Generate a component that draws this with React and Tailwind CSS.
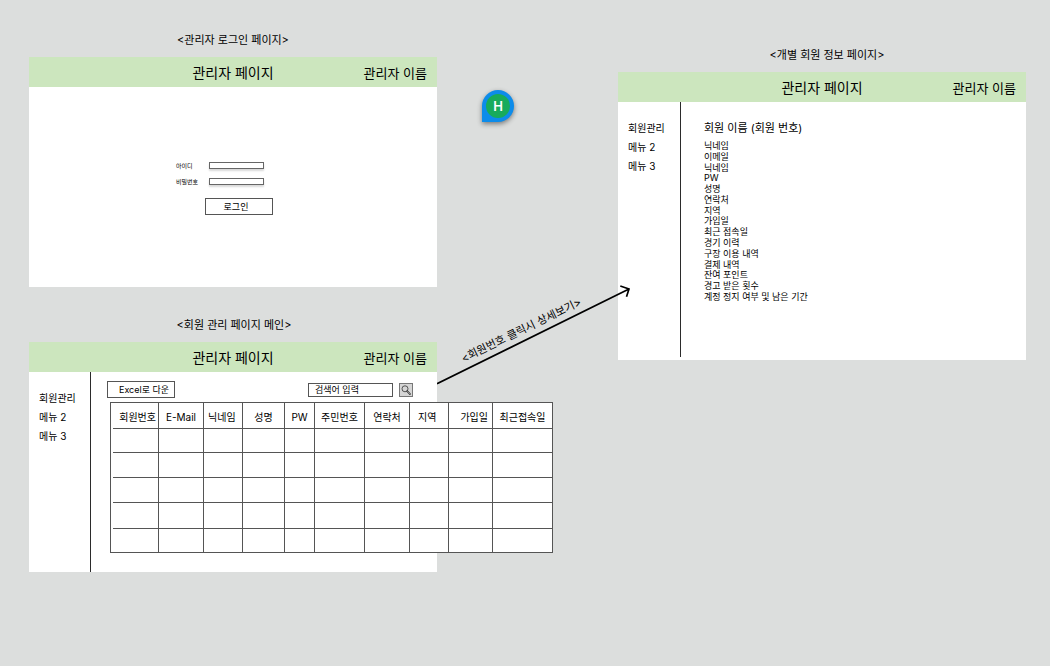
const fontStack = "font-['Inter','Noto_Sans_CJK_KR',sans-serif]";

function Frame({ caption, place, captionClass = '', bodyClass, children }) {
  return (
    <section className={`absolute w-[408px] ${place}`}>
      <h2 className={`mb-[9px] text-center text-[11px] leading-4 ${captionClass}`}>{caption}</h2>
      <header className="grid h-[30px] grid-cols-[1fr_auto_1fr] items-center bg-[#cce6be] px-[10px] pt-px">
        <h3 className="col-start-2 text-[14px] leading-5">관리자 페이지</h3>
        <span className="justify-self-end text-[13px] leading-5">관리자 이름</span>
      </header>
      <div className={`bg-white ${bodyClass}`}>{children}</div>
    </section>
  );
}

function Sidebar({ className = '' }) {
  return (
    <nav className={`shrink-0 border-r border-[#2b2b2b] pt-[18px] pl-[10px] text-[10px] ${className}`}>
      <ul className="flex flex-col gap-[3px] leading-4">
        <li><a href="#members">회원관리</a></li>
        <li><a href="#menu-2">메뉴 2</a></li>
        <li><a href="#menu-3">메뉴 3</a></li>
      </ul>
    </nav>
  );
}

function LoginField({ id, label, type }) {
  return (
    <div className="flex items-center">
      <label htmlFor={id} className="w-[33px] text-[6px] leading-[7px] whitespace-nowrap">{label}</label>
      <input
        id={id}
        type={type}
        className="h-[7px] w-[55px] border border-[#666] bg-white px-0.5 text-[6px] shadow-[0_2px_2px_rgba(0,0,0,0.15)]"
      />
    </div>
  );
}

const columns = [
  { name: '회원번호', width: 'w-12', align: 'text-right pr-0.5' },
  { name: 'E-Mail', width: 'w-[45px]', align: 'text-center' },
  { name: '닉네임', width: 'w-[39px]', align: 'text-left pl-1' },
  { name: '성명', width: 'w-[42px]', align: 'text-center' },
  { name: 'PW', width: 'w-[30px]', align: 'text-center' },
  { name: '주민번호', width: 'w-[50px]', align: 'text-center' },
  { name: '연락처', width: 'w-[45px]', align: 'text-center' },
  { name: '지역', width: 'w-[39px]', align: 'text-left pl-2' },
  { name: '가입일', width: 'w-[44px]', align: 'text-right pr-1' },
  { name: '최근접속일', width: 'w-[60px]', align: 'text-center' },
];

const rows = ['h-6', 'h-[25px]', 'h-[25px]', 'h-[26px]', 'h-6'];

function MemberTable() {
  return (
    <table className="mt-1 ml-[19px] w-[443px] table-fixed border-separate border-spacing-0 border-t border-l border-[#555] bg-white text-[10px] leading-4">
      <thead>
        <tr>
          {columns.map((c, i) => (
            <th key={c.name} scope="col" className={`border-r border-[#555] p-0 font-normal whitespace-nowrap ${c.width} ${i === 0 ? 'pl-[2px]' : ''}`}>
              <div className={`h-[26px] border-b border-[#555] pt-[6px] ${c.align}`}>{c.name}</div>
            </th>
          ))}
        </tr>
      </thead>
      <tbody>
        {rows.map((height, r) => (
          <tr key={r}>
            {columns.map((c, i) => (
              <td key={c.name} className={`border-r border-[#555] p-0 ${i === 0 && r < rows.length - 1 ? 'pl-[2px]' : ''}`}>
                <div className={`border-b border-[#555] ${height}`} />
              </td>
            ))}
          </tr>
        ))}
      </tbody>
    </table>
  );
}

const details = [
  '닉네임', '이메일', '닉네임', 'PW', '성명', '연락처', '지역', '가입일', '최근 접속일',
  '경기 이력', '구장 이용 내역', '결제 내역', '잔여 포인트', '경고 받은 횟수', '계정 정지 여부 및 남은 기간',
];

export default function App() {
  return (
    <main className={`relative min-h-screen overflow-hidden bg-[#dcdedd] text-black antialiased ${fontStack}`}>
      <Frame caption="<관리자 로그인 페이지>" place="top-8 left-[29px]" bodyClass="h-[200px]">
        <form className="flex flex-col pt-[75px] pl-[147px]" onSubmit={(e) => e.preventDefault()}>
          <div className="flex flex-col gap-[9px]">
            <LoginField id="login-id" label="아이디" type="text" />
            <LoginField id="login-pw" label="비밀번호" type="password" />
          </div>
          <button type="submit" className="mt-[13px] ml-[29px] h-[17px] w-[68px] border border-[#555] pr-1.5 text-[9px] leading-3">
            로그인
          </button>
        </form>
      </Frame>

      <Frame caption="<회원 관리 페이지 메인>" place="top-[317px] left-[29px]" captionClass="pl-0.5" bodyClass="flex h-[200px]">
        <Sidebar className="w-[62px]" />
        <div className="min-w-0 grow">
          <div className="flex items-center pt-[9px] pl-4">
            <button type="button" className="h-[17px] w-[68px] border border-[#555] pl-1.5 text-[9px] leading-3 whitespace-nowrap">
              Excel로 다운
            </button>
            <form className="ml-auto flex items-center gap-1.5 pr-6" onSubmit={(e) => e.preventDefault()}>
              <input
                type="search"
                aria-label="검색어"
                placeholder="검색어 입력"
                className="h-[14px] w-[85px] border border-[#555] bg-white px-[6px] text-[9px] leading-3 placeholder:text-black placeholder:opacity-100"
              />
              <button type="submit" aria-label="검색" className="grid size-[14px] place-items-center border border-[#777] bg-[#d6d6d6]">
                <svg viewBox="0 0 12 12" className="size-3" fill="none" stroke="#333">
                  <circle cx="5" cy="4.8" r="3" strokeWidth="0.8" />
                  <path d="M7.2 7.2 10 10.2" strokeWidth="1.7" strokeLinecap="round" />
                  <path d="M7.6 7.6 9.9 10" stroke="#d6d6d6" strokeWidth="0.6" strokeLinecap="round" />
                </svg>
              </button>
            </form>
          </div>
          <MemberTable />
        </div>
      </Frame>

      <Frame caption="<개별 회원 정보 페이지>" place="top-[47px] left-[618px]" captionClass="pl-[10px]" bodyClass="flex h-[258px]">
        <Sidebar className="mb-[3px] w-[63px]" />
        <article className="pt-[18px] pl-[23px]">
          <h4 className="text-[11px] leading-4">회원 이름 (회원 번호)</h4>
          <ul className="mt-[5px] flex h-[161px] flex-col justify-between text-[9px] leading-[10px] whitespace-nowrap">
            {details.map((d, i) => (
              <li key={i}>{d}</li>
            ))}
          </ul>
        </article>
      </Frame>

      <svg className="absolute top-[280px] left-[437px] h-[106px] w-[196px]" viewBox="0 0 196 106" fill="none" stroke="#000" strokeWidth="1.7" aria-hidden="true">
        <path d="M0 103.7 192 9M183.3 6 192 9 189.5 16.8" />
      </svg>
      <p className="absolute top-[322px] left-[455px] -rotate-[26deg] text-[11px] leading-4 whitespace-nowrap">
        {'<회원번호 클릭시 상세보기>'}
      </p>

      <div className="absolute top-[90px] left-[482px] grid size-8 place-items-center rounded-full rounded-bl-none bg-[#0d8cea] shadow-[0_2px_5px_rgba(0,0,0,0.45)]">
        <span className="grid size-6 place-items-center rounded-full bg-[#18ab5c] text-[13px] leading-4 font-semibold text-white">H</span>
      </div>
    </main>
  );
}
